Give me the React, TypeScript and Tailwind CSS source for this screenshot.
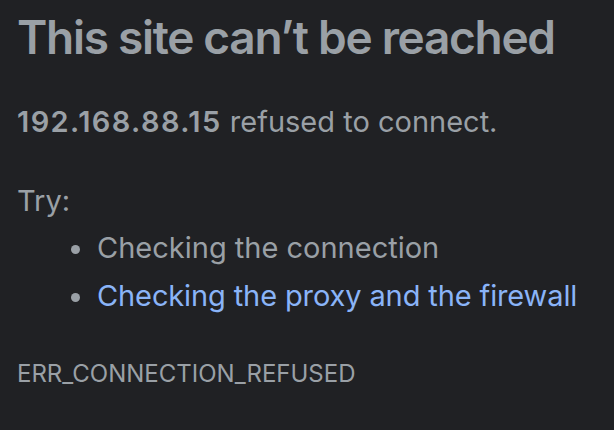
export default function App() {
  return (
    <div
      className="w-[614px] h-[430px] overflow-hidden bg-[#202124] text-[#9aa0a6] pl-[17px] pt-[9px]"
      style={{ fontFamily: "Inter, 'Noto Sans', sans-serif" }}
    >
      {/* Heading */}
      <h1 className="text-[46px] leading-[56px] font-semibold tracking-[-1.3px]">
        This site can’t be reached
      </h1>

      <p className="mt-[41px] text-[29px] leading-[32px]">
        <span className="font-semibold tracking-[1.4px]">192.168.88.15</span> refused to connect.
      </p>

      <p className="mt-[47px] text-[29px] leading-[32px]">Try:</p>

      <ul className="mt-[7px] pl-[54px] text-[29px] leading-[48px]">
        <li className="flex items-center gap-[17px]">
          <span className="mt-[3px] w-[9px] h-[9px] rounded-full bg-[#9aa0a6]" />
          <span>Checking the connection</span>
        </li>
        <li className="flex items-center gap-[17px]">
          <span className="mt-[3px] w-[9px] h-[9px] rounded-full bg-[#9aa0a6]" />
          <span className="text-[#8ab4f8] tracking-[-0.12px]">Checking the proxy and the firewall</span>
        </li>
      </ul>

      <div className="mt-[40px] text-[24px] leading-[28px]">ERR_CONNECTION_REFUSED</div>
    </div>
  );
}
